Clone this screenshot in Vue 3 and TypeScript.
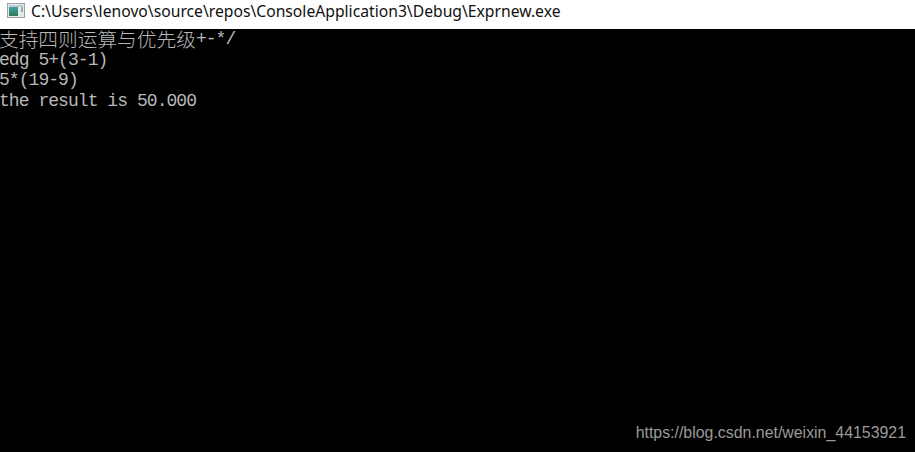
<script setup lang="ts">
const title = "C:\\Users\\lenovo\\source\\repos\\ConsoleApplication3\\Debug\\Exprnew.exe";
interface Line {
  cjk?: string;
  text: string;
}
const lines: Line[] = [
  { cjk: "支持四则运算与优先级", text: "+-*/" },
  { text: "edg 5+(3-1)" },
  { text: "5*(19-9)" },
  { text: "the result is 50.000" },
];
</script>

<template>
  <div class="window">
    <header class="titlebar">
      <svg class="icon" width="18" height="15" viewBox="0 0 18 15" aria-hidden="true">
        <defs>
          <linearGradient id="pane" x1="0" y1="0" x2="0" y2="1">
            <stop offset="0" stop-color="#3fa0a8" />
            <stop offset="1" stop-color="#2e7d4f" />
          </linearGradient>
        </defs>
        <rect x="0.5" y="0.5" width="17" height="14" fill="#e6eaec" stroke="#9aa2a6" />
        <rect x="2" y="2" width="14" height="2" fill="#c2ccd1" />
        <rect x="2" y="4" width="9" height="9" fill="url(#pane)" />
        <rect x="14" y="4" width="2" height="5" fill="#8fb3a8" />
      </svg>
      <span class="title">{{ title }}</span>
    </header>
    <main class="console">
      <div v-for="line in lines" :key="line.text" class="line">
        <span v-if="line.cjk" class="cjk">{{ line.cjk }}</span>{{ line.text }}
      </div>
      <div class="watermark">https://blog.csdn.net/weixin_44153921</div>
    </main>
  </div>
</template>

<style scoped>
.window {
  width: 915px;
  height: 452px;
  display: flex;
  flex-direction: column;
  overflow: hidden;
}
.titlebar {
  height: 29px;
  flex: none;
  background: #fff;
  display: flex;
  align-items: center;
  gap: 6px;
  padding: 0 0 8px 7px;
  box-sizing: border-box;
}
.icon {
  flex: none;
}
.title {
  font-family: "Noto Sans", "Open Sans", sans-serif;
  font-size: 15.7px;
  line-height: 20px;
  color: #111;
  white-space: nowrap;
}
.console {
  flex: 1;
  position: relative;
  background: #000;
  color: #b8b8b8;
  font-family: "Liberation Mono", "Noto Sans CJK SC", monospace;
  font-size: 18px;
  letter-spacing: -0.95px;
  line-height: 20.5px;
}
.line {
  white-space: pre;
  height: 20.5px;
  margin-left: -1px;
}
.cjk {
  display: inline-block;
  height: 20.5px;
  vertical-align: top;
  font-family: "Noto Sans CJK SC", sans-serif;
  font-size: 19.7px;
  letter-spacing: 0;
  line-height: 19.5px;
  font-weight: 300;
}
.watermark {
  position: absolute;
  right: 9px;
  bottom: 10px;
  font-family: "Liberation Sans", sans-serif;
  font-size: 15.9px;
  letter-spacing: 0;
  line-height: 18px;
  color: #9a9a9a;
}
</style>
